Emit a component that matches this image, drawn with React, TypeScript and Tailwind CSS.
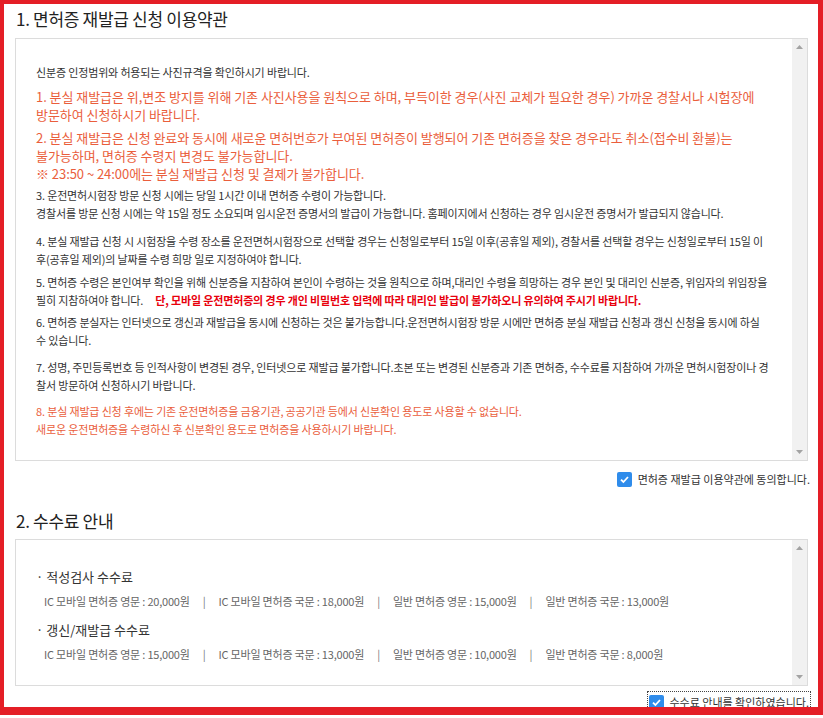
import React from 'react'

const Check = () => (
  <span className="flex items-center justify-center w-[15px] h-[15px] rounded-[2px] bg-[#2f8ceb]">
    <svg width="11" height="11" viewBox="0 0 11 11">
      <path d="M2 5.6 L4.4 8 L9 3" fill="none" stroke="#fff" strokeWidth="1.8" />
    </svg>
  </span>
)

const ScrollTrack = () => (
  <div className="w-[15px] shrink-0 bg-[#f1f1f1] flex flex-col justify-between items-center py-[6px]">
    <svg width="7" height="4" viewBox="0 0 7 4">
      <path d="M0 4 L3.5 0 L7 4 Z" fill="#a3a3a3" />
    </svg>
    <svg width="7" height="4" viewBox="0 0 7 4">
      <path d="M0 0 L3.5 4 L7 0 Z" fill="#a3a3a3" />
    </svg>
  </div>
)

const fees = [
  {
    title: '적성검사 수수료',
    items: ['IC 모바일 면허증 영문 : 20,000원', 'IC 모바일 면허증 국문 : 18,000원', '일반 면허증 영문 : 15,000원', '일반 면허증 국문 : 13,000원'],
  },
  {
    title: '갱신/재발급 수수료',
    items: ['IC 모바일 면허증 영문 : 15,000원', 'IC 모바일 면허증 국문 : 13,000원', '일반 면허증 영문 : 10,000원', '일반 면허증 국문 : 8,000원'],
  },
]

export default function App() {
  return (
    <div className="relative w-[823px] h-[718px] bg-white overflow-hidden font-['Noto_Sans_CJK_KR','Noto_Sans',sans-serif] text-[#333]">
      <div className="pl-[15px] pr-[15px] pt-[7px]">
        {/* 약관 */}
        <h2 className="pl-[1px] text-[17px] tracking-[-0.3px] leading-[24px] text-[#222]">1. 면허증 재발급 신청 이용약관</h2>
        <div className="mt-[7px] h-[423px] flex border border-[#dcdcdc]">
          <div className="flex-1 pl-[20px] pr-[22px] pt-[24px] text-[11px] tracking-[-0.15px] leading-[18px] text-[#333]">
            <p>신분증 인정범위와 허용되는 사진규격을 확인하시기 바랍니다.</p>
            <p className="mt-[7px] text-[13px] tracking-[-0.05px] break-keep text-[#ea5e3c]">
              1. 분실 재발급은 위,변조 방지를 위해 기존 사진사용을 원칙으로 하며, 부득이한 경우(사진 교체가 필요한 경우) 가까운 경찰서나 시험장에 방문하여 신청하시기 바랍니다.
            </p>
            <p className="mt-[5px] text-[13px] tracking-[-0.05px] break-keep text-[#ea5e3c]">
              2. 분실 재발급은 신청 완료와 동시에 새로운 면허번호가 부여된 면허증이 발행되어 기존 면허증을 찾은 경우라도 취소(접수비 환불)는 불가능하며, 면허증 수령지 변경도 불가능합니다.
              <br />※ 23:50 ~ 24:00에는 분실 재발급 신청 및 결제가 불가합니다.
            </p>
            <p className="mt-[3px]">
              3. 운전면허시험장 방문 신청 시에는 당일 1시간 이내 면허증 수령이 가능합니다.
              <br />경찰서를 방문 신청 시에는 약 15일 정도 소요되며 임시운전 증명서의 발급이 가능합니다. 홈페이지에서 신청하는 경우 임시운전 증명서가 발급되지 않습니다.
            </p>
            <p className="mt-[10px]">
              4. 분실 재발급 신청 시 시험장을 수령 장소를 운전면허시험장으로 선택할 경우는 신청일로부터 15일 이후(공휴일 제외), 경찰서를 선택할 경우는 신청일로부터 15일 이후(공휴일 제외)의 날짜를 수령 희망 일로 지정하여야 합니다.
            </p>
            <p className="mt-[5px]">
              5. 면허증 수령은 본인여부 확인을 위해 신분증을 지참하여 본인이 수령하는 것을 원칙으로 하며,대리인 수령을 희망하는 경우 본인 및 대리인 신분증, 위임자의 위임장을 필히 지참하여야 합니다.
              <b className="pl-[12px] font-bold text-[#e8000d]">단, 모바일 운전면허증의 경우 개인 비밀번호 입력에 따라 대리인 발급이 불가하오니 유의하여 주시기 바랍니다.</b>
            </p>
            <p className="mt-[4px]">
              6. 면허증 분실자는 인터넷으로 갱신과 재발급을 동시에 신청하는 것은 불가능합니다.운전면허시험장 방문 시에만 면허증 분실 재발급 신청과 갱신 신청을 동시에 하실 수 있습니다.
            </p>
            <p className="mt-[9px]">
              7. 성명, 주민등록번호 등 인적사항이 변경된 경우, 인터넷으로 재발급 불가합니다.초본 또는 변경된 신분증과 기존 면허증, 수수료를 지참하여 가까운 면허시험장이나 경찰서 방문하여 신청하시기 바랍니다.
            </p>
            <p className="mt-[8px] text-[#ea5e3c]">
              8. 분실 재발급 신청 후에는 기존 운전면허증을 금융기관, 공공기관 등에서 신분확인 용도로 사용할 수 없습니다.
              <br />새로운 운전면허증을 수령하신 후 신분확인 용도로 면허증을 사용하시기 바랍니다.
            </p>
          </div>
          <ScrollTrack />
        </div>
        <label className="mt-[10px] -mr-[2px] flex justify-end items-center gap-[6px] text-[11px] leading-[16px] text-[#333]">
          <Check />
          <span>면허증 재발급 이용약관에 동의합니다.</span>
        </label>

        {/* 수수료 */}
        <h2 className="mt-[22px] pl-[1px] text-[17px] tracking-[-0.3px] leading-[24px] text-[#222]">2. 수수료 안내</h2>
        <div className="mt-[6px] h-[147px] flex border border-[#dcdcdc]">
          <div className="flex-1 pl-[20px] pt-[28px]">
            {fees.map((f, i) => (
              <div key={f.title} className={i > 0 ? 'mt-[11px]' : ''}>
                <p className="text-[13px] leading-[18px] text-[#333]">· {f.title}</p>
                <p className="mt-[6px] pl-[8px] flex text-[11px] tracking-[-0.2px] leading-[18px] text-[#666]">
                  {f.items.map((t, j) => (
                    <React.Fragment key={t}>
                      {j > 0 && <span className="px-[13px] text-[#777]">|</span>}
                      <span>{t}</span>
                    </React.Fragment>
                  ))}
                </p>
              </div>
            ))}
          </div>
          <ScrollTrack />
        </div>
        <div className="mt-[5px] -mr-[3px] flex justify-end">
          <label className="flex items-center gap-[5px] border border-dotted border-[#444] pl-[1px] pr-[1px] py-[2px] text-[11px] leading-[16px] text-[#333]">
            <Check />
            <span>수수료 안내를 확인하였습니다.</span>
          </label>
        </div>
      </div>

      {/* 캡처 강조 테두리 */}
      <div className="absolute left-0 top-0 w-[823px] h-[715px] border-l-[4px] border-t-[4px] border-r-[5px] border-b-[8px] border-[#e41e26] pointer-events-none" />
    </div>
  )
}
